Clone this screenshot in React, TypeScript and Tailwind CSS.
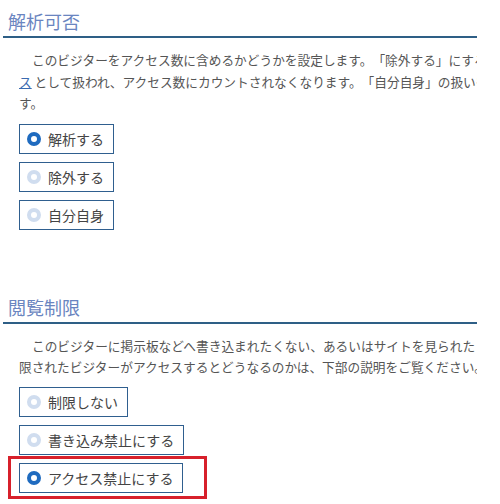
import React from "react";

const FONT = "font-['Meiryo','Noto_Sans_CJK_JP',sans-serif]";

function Radio({ label, checked }: { label: string; checked?: boolean }) {
  return (
    <div className="flex h-[30px] w-fit items-center gap-[7px] border border-[#2f5f8f] pl-[7px] pr-[9px]">
      <span
        className={`block h-[14px] w-[14px] shrink-0 rounded-full border-[4px] bg-white ${
          checked ? "border-[#1f6bbf]" : "border-[#d0ddef]"
        }`}
      />
      <span className="text-[14px] leading-[20px] text-[#444]">{label}</span>
    </div>
  );
}

function Heading({ children }: { children: React.ReactNode }) {
  return (
    <h2 className="border-b-2 border-[#2e5f86] pb-[3px] pl-[5px] text-[18px] leading-[24px] text-[#6a85c0]">
      {children}
    </h2>
  );
}

export default function App() {
  return (
    <div className={`h-[504px] w-[500px] overflow-hidden bg-white ${FONT}`}>
      <div className="ml-[3px] w-[474px]">
        <div className="pt-[9px]">
          <Heading>解析可否</Heading>
          <div className="mt-[11px] overflow-hidden pl-[16px] text-[12.7px] leading-[21.5px] text-[#555] whitespace-nowrap [text-spacing-trim:space-all]">
            <div className="pl-[13px]">
              このビジターをアクセス数に含めるかどうかを設定します。「除外する」にすると、そのビジターはテストアクセ
            </div>
            <div>
              <span className="text-[#3a6ab0] underline">ス</span> として扱われ、アクセス数にカウントされなくなります。「自分自身」の扱いも同様で
            </div>
            <div>す。</div>
          </div>
          <div className="mt-[10px] flex flex-col gap-[8px] pl-[16px]">
            <Radio label="解析する" checked />
            <Radio label="除外する" />
            <Radio label="自分自身" />
          </div>
        </div>

        <div className="mt-[65px]">
          <Heading>閲覧制限</Heading>
          <div className="mt-[11px] overflow-hidden pl-[16px] text-[12.7px] leading-[21.5px] text-[#555] whitespace-nowrap [text-spacing-trim:space-all]">
            <div className="pl-[13px]">
              このビジターに掲示板などへ書き込まれたくない、あるいはサイトを見られたくない場合に設定します。制
            </div>
            <div>限されたビジターがアクセスするとどうなるのかは、下部の説明をご覧ください。</div>
          </div>
          <div className="mt-[9px] flex flex-col gap-[8px] pl-[16px]">
            <Radio label="制限しない" />
            <Radio label="書き込み禁止にする" />
            <div className="relative w-fit">
              <Radio label="アクセス禁止にする" checked />
              <div className="pointer-events-none absolute -left-[11px] -top-[7px] h-[43px] w-[199px] border-[3px] border-[#d7202b]" />
            </div>
          </div>
        </div>
      </div>
    </div>
  );
}
